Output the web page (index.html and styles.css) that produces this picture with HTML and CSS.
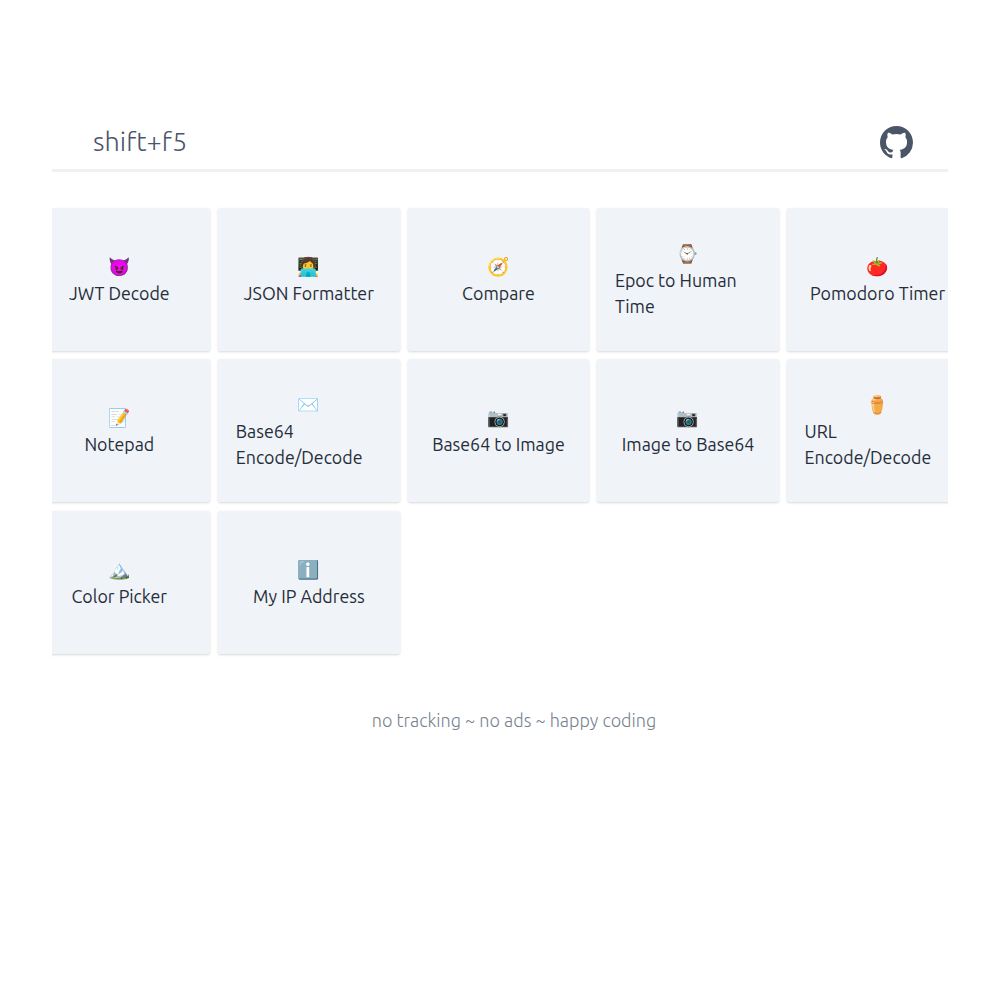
FILE: index.html
```html
<!DOCTYPE html>
<html lang="en">
<head>
    <meta charset="UTF-8">
    <title>shift+f5</title>
    <link rel="stylesheet" href="styles.css">
</head>
<body>
    <div class="container">
        <header class="header">
            <span class="brand">shift+f5</span>
            <svg class="github" viewBox="0 0 16 16" aria-hidden="true"><path fill-rule="evenodd" d="M8 0C3.58 0 0 3.58 0 8c0 3.54 2.29 6.53 5.47 7.59.4.07.55-.17.55-.38 0-.19-.01-.82-.01-1.49-2.01.37-2.53-.49-2.69-.94-.09-.23-.48-.94-.82-1.13-.28-.15-.68-.52-.01-.53.63-.01 1.08.58 1.23.82.72 1.21 1.87.87 2.33.66.07-.52.28-.87.51-1.07-1.78-.2-3.64-.89-3.64-3.95 0-.87.31-1.59.82-2.15-.08-.2-.36-1.02.08-2.12 0 0 .67-.21 2.2.82.64-.18 1.32-.27 2-.27s1.36.09 2 .27c1.53-1.04 2.2-.82 2.2-.82.44 1.1.16 1.92.08 2.12.51.56.82 1.27.82 2.15 0 3.07-1.87 3.75-3.65 3.95.29.25.54.73.54 1.48 0 1.07-.01 1.93-.01 2.2 0 .21.15.46.55.38A8.01 8.01 0 0 0 16 8c0-4.42-3.58-8-8-8z"/></svg>
        </header>

        <div class="tools-clip">
            <main class="tools">
                <a class="tool"><span class="emoji">😈</span><span class="name">JWT Decode</span></a>
                <a class="tool"><span class="emoji">👩‍💻</span><span class="name">JSON Formatter</span></a>
                <a class="tool"><span class="emoji">🧭</span><span class="name">Compare</span></a>
                <a class="tool"><span class="emoji">⌚</span><span class="name left">Epoc to Human Time</span></a>
                <a class="tool"><span class="emoji">🍅</span><span class="name">Pomodoro Timer</span></a>
                <a class="tool"><span class="emoji">📝</span><span class="name">Notepad</span></a>
                <a class="tool"><span class="emoji">✉️</span><span class="name left">Base64 Encode/Decode</span></a>
                <a class="tool"><span class="emoji">📷</span><span class="name">Base64 to Image</span></a>
                <a class="tool"><span class="emoji">📷</span><span class="name">Image to Base64</span></a>
                <a class="tool"><span class="emoji">⚱️</span><span class="name left">URL Encode/Decode</span></a>
                <a class="tool"><span class="emoji">🏔️</span><span class="name">Color Picker</span></a>
                <a class="tool"><span class="emoji">ℹ️</span><span class="name">My IP Address</span></a>
            </main>
        </div>

        <footer class="footer">no tracking ~ no ads ~ happy coding</footer>
    </div>
</body>
</html>
```

FILE: styles.css
```css
body {
    margin: 0;
    background: #fff;
    font-family: 'Ubuntu', 'Noto Sans', 'Open Sans', sans-serif;
    color: #2d3748;
}

.container {
    width: 896px;
    margin: 0 auto;
    padding-top: 112px;
}

.header {
    display: flex;
    justify-content: space-between;
    align-items: center;
    box-sizing: border-box;
    height: 60px;
    padding: 1px 35px 0 41px;
    border-bottom: 3px solid #eef0f3;
}

.brand {
    font-size: 27px;
    font-weight: 300;
    color: #4a5568;
}

.github {
    width: 33px;
    height: 33px;
    margin-top: 3px;
    fill: #4a5568;
}

.tools-clip {
    overflow: hidden;
    margin-top: 35px;
    padding: 1px 0 6px;
}

.tools {
    display: grid;
    grid-template-columns: repeat(5, 181.4px);
    grid-auto-rows: 143px;
    gap: 8.4px 8.2px;
    margin-left: -23.4px;
}

.tool {
    display: flex;
    flex-direction: column;
    align-items: center;
    justify-content: center;
    box-sizing: border-box;
    padding: 0 17.6px;
    background: #f0f3f8;
    border-radius: 2px;
    box-shadow: 0 1px 3px rgba(0, 0, 0, 0.1), 0 1px 2px rgba(0, 0, 0, 0.06);
}

.emoji {
    font-family: 'Noto Color Emoji', sans-serif;
    font-size: 18px;
    line-height: 27px;
}

.name {
    font-size: 17.8px;
    line-height: 26.4px;
    color: #252d3a;
    text-align: center;
    white-space: nowrap;
}

.name.left {
    align-self: flex-start;
    text-align: left;
    white-space: normal;
}

.footer {
    margin-top: 50.5px;
    padding-left: 28px;
    text-align: center;
    font-size: 18px;
    font-weight: 300;
    color: #78828f;
}
```
